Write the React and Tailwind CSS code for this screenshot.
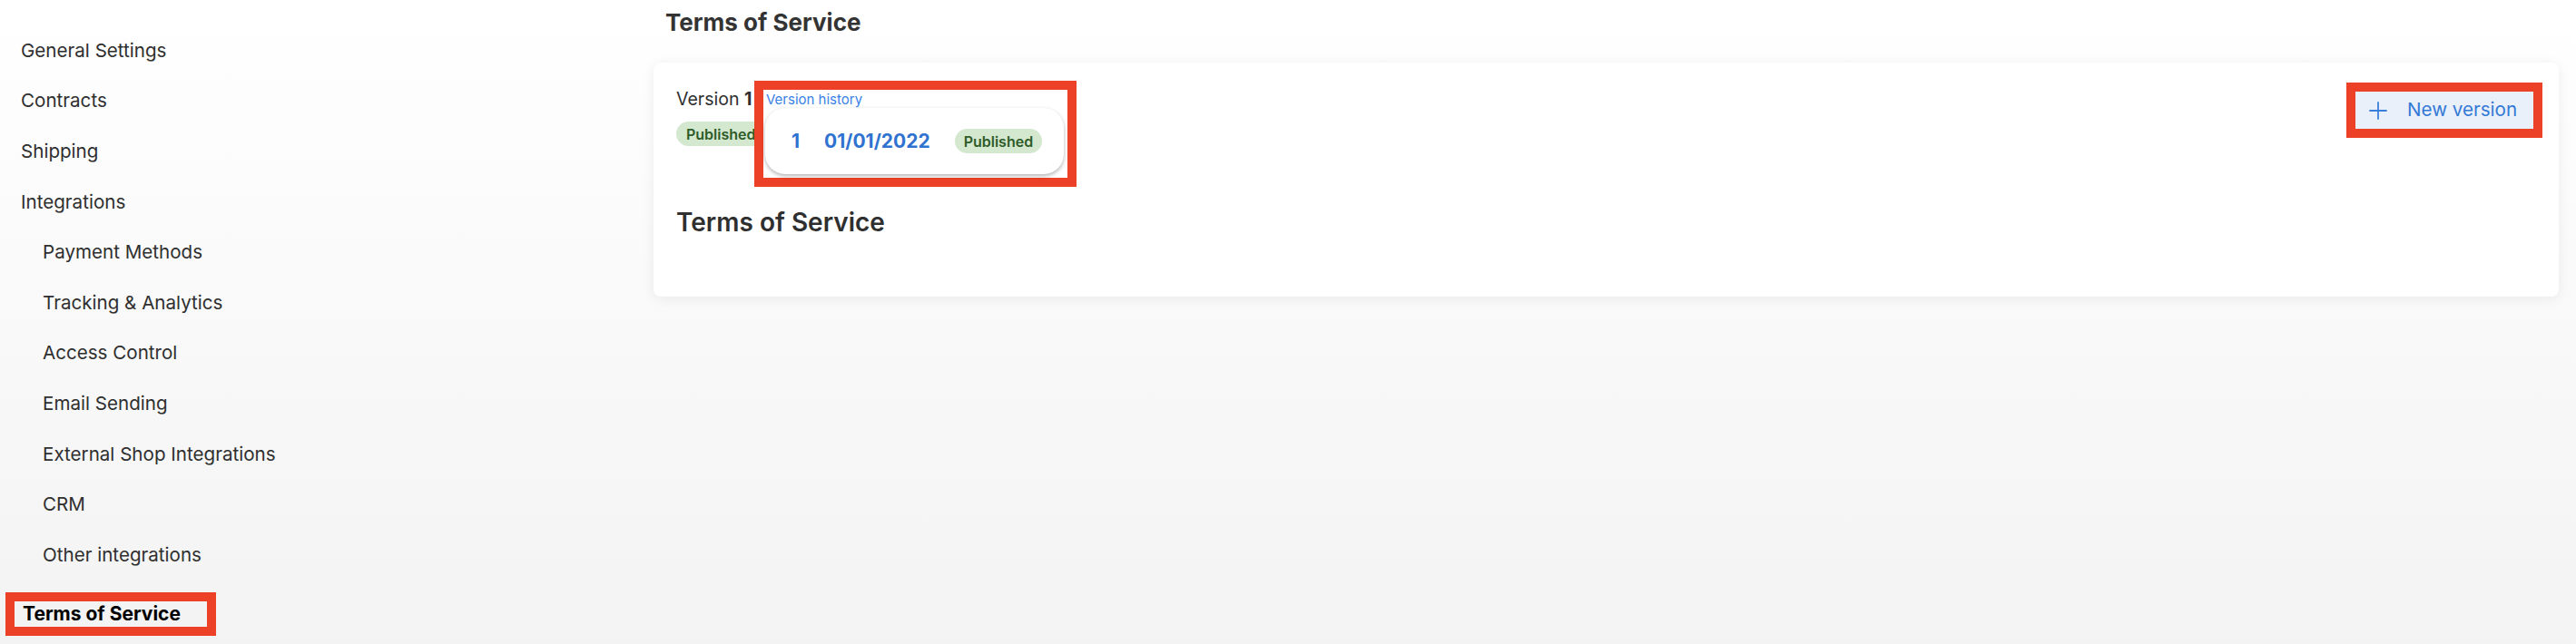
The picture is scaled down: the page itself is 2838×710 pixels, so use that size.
export default function App() {
  const nav = [
    { label: "General Settings", sub: false },
    { label: "Contracts", sub: false },
    { label: "Shipping", sub: false },
    { label: "Integrations", sub: false },
    { label: "Payment Methods", sub: true },
    { label: "Tracking & Analytics", sub: true },
    { label: "Access Control", sub: true },
    { label: "Email Sending", sub: true },
    { label: "External Shop Integrations", sub: true },
    { label: "CRM", sub: true },
    { label: "Other integrations", sub: true },
  ];

  return (
    <div className="flex h-[710px] w-full bg-linear-to-b from-white to-[#f3f3f3] font-['Inter',sans-serif] text-[#2f2f2f]">
      <aside className="w-[720px] shrink-0 pt-[28.5px]">
        {nav.map((n) => (
          <div
            key={n.label}
            className={
              "flex h-[55.6px] items-center text-[20.6px] " +
              (n.sub ? "pl-[47px]" : "pl-[23px]")
            }
          >
            {n.label}
          </div>
        ))}
        <div className="relative ml-[16px] mt-[23px] flex h-[28px] w-[212px] items-center bg-[#f3f3f3] pl-[9px] text-[21px] font-bold text-black">
          Terms of Service
          <div className="pointer-events-none absolute -inset-[10px] border-[10px] border-[#ec4027]" />
        </div>
      </aside>

      <main className="flex-1 pr-[19px]">
        <h1 className="pl-[13px] pt-[9px] text-[26px] font-bold leading-[32px] text-[#333]">
          Terms of Service
        </h1>

        <div className="relative mt-[28px] flex h-[258px] justify-between rounded-[8px] bg-white pl-[25px] pr-[28px] pt-[28px] shadow-[0_2px_14px_rgba(0,0,0,0.07)]">
          <div>
            <div className="text-[19.5px] leading-[24px] text-[#2f2f2f]">
              Version <span className="font-bold">1</span>
            </div>
            <div className="mt-[13px] inline-flex h-[27px] items-center rounded-full bg-[#d3e8cf] px-[11px] text-[16px] font-semibold text-[#2e5b28]">
              Published
            </div>
            <h2 className="mt-[68px] text-[28px] font-semibold leading-[32px] text-[#2f2f2f]">
              Terms of Service
            </h2>
          </div>

          <div className="relative mt-[4px] h-fit">
            <button className="flex h-[41px] w-[196px] items-center bg-[#e9f0f9] pl-[15px] text-[20.6px] text-[#3479d6]">
              <svg width="20" height="20" viewBox="0 0 20 20" fill="none" stroke="#3a7fdb" strokeWidth="1.8" strokeLinecap="round">
                <line x1="10" y1="1" x2="10" y2="19" />
                <line x1="1" y1="10" x2="19" y2="10" />
              </svg>
              <span className="ml-[22px]">New version</span>
            </button>
            <div className="pointer-events-none absolute -inset-[10px] border-[10px] border-[#ec4027]" />
          </div>

          <div className="absolute left-[111px] top-[20px] w-[355px] border-[10px] border-[#ec4027] bg-white">
            <div className="h-[97px] pl-[3px] pt-[2px]">
              <div className="text-[15px] leading-[18px] text-[#3a82e6]">Version history</div>
              <div className="ml-[-1px] flex h-[73px] w-[329px] items-center rounded-[22px] bg-white pl-[29px] shadow-[0_2px_4px_rgba(0,0,0,0.3)]">
                <span className="text-[21px] font-bold text-[#2f72cf]">1</span>
                <span className="ml-[27px] text-[21px] font-bold text-[#2f72cf]">01/01/2022</span>
                <span className="ml-[27px] inline-flex h-[27px] items-center rounded-full bg-[#d3e8cf] px-[10px] text-[16px] font-semibold text-[#2e5b28]">
                  Published
                </span>
              </div>
            </div>
          </div>
        </div>
      </main>
    </div>
  );
}
